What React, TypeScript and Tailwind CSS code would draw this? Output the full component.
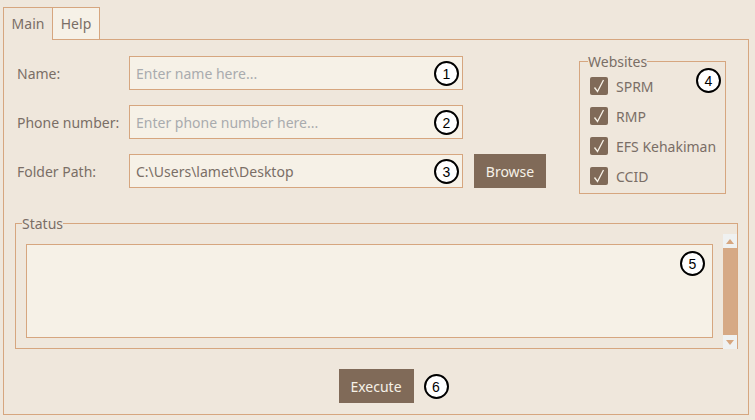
import { useState } from 'react';

// Numbered callout drawn over the controls
function Callout({ n, className }: { n: number; className: string }) {
  return (
    <span
      className={`absolute flex h-[25px] w-[25px] items-center justify-center rounded-full border-2 border-black bg-white text-[14px] leading-none text-black font-['Liberation_Sans',sans-serif] ${className}`}
    >
      {n}
    </span>
  );
}

function Field({
  label,
  placeholder,
  value,
  n,
}: {
  label: string;
  placeholder: string;
  value?: string;
  n: number;
}) {
  return (
    <div className="flex h-[34px] items-center">
      <span className="w-[112px] shrink-0">{label}</span>
      <div className="relative h-[34px] w-[334px]">
        <input
          className="h-full w-full border border-[#d6a67f] bg-[#f6f1e7] pl-[6px] text-[#7a6e66] outline-none placeholder:text-[#a9abae]"
          placeholder={placeholder}
          defaultValue={value}
        />
        <Callout n={n} className="right-[4px] top-[5px]" />
      </div>
    </div>
  );
}

const SITES = ['SPRM', 'RMP', 'EFS Kehakiman', 'CCID'];

function App() {
  const [tab, setTab] = useState<'main' | 'help'>('main');

  return (
    <div className="h-[420px] w-[755px] bg-[#efe7dc] pl-[3px] pt-[7px] text-[14px] text-[#7a6e66] font-['Noto_Sans',sans-serif]">
      {/* tabs */}
      <div className="flex h-[32px] items-start">
        <button
          onClick={() => setTab('main')}
          className="relative z-10 flex h-[33px] w-[50px] items-start justify-center border border-b-0 border-[#d6a67f] bg-[#efe7dc] pt-[5px]"
        >
          Main
        </button>
        <button
          onClick={() => setTab('help')}
          className="flex h-[32px] w-[47px] items-start justify-center border-t border-r border-[#d6a67f] bg-[#f6f1e7] pt-[5px]"
        >
          Help
        </button>
      </div>

      {/* panel */}
      <div className="flex h-[376px] w-[746px] flex-col border border-[#d6a67f]">
        <div className="flex h-[153px] items-start">
          <div className="flex flex-col gap-[15px] pl-[13px] pt-[16px]">
            <Field label="Name:" placeholder="Enter name here..." n={1} />
            <Field label="Phone number:" placeholder="Enter phone number here..." n={2} />
            <div className="flex items-center">
              <Field label="Folder Path:" placeholder="" value="C:\Users\lamet\Desktop" n={3} />
              <button className="ml-[11px] h-[34px] w-[72px] bg-[#806a58] text-[#f6f1e7]">Browse</button>
            </div>
          </div>

          <fieldset className="ml-auto mr-[22px] mt-[12px] w-[147px] border border-[#d6a67f] pb-[8px] pl-[10px]">
            <legend className="ml-[-2px] px-0 leading-[19px]">Websites</legend>
            <div className="mt-[6px] flex flex-col gap-[12px]">
              {SITES.map((s, i) => (
                <label key={s} className="relative flex h-[18px] items-center gap-[8px]">
                  <span className="flex h-[18px] w-[18px] items-center justify-center rounded-[2px] bg-[#806a58]">
                    <svg width="12" height="14" viewBox="0 0 12 14" fill="none">
                      <path d="M1.5 8.5 L4.5 12.5 L10.5 1" stroke="#f6f1e7" strokeWidth="1.3" />
                    </svg>
                  </span>
                  <span>{s}</span>
                  {i === 0 && <Callout n={4} className="right-[4px] top-[-9px]" />}
                </label>
              ))}
            </div>
          </fieldset>
        </div>

        {/* status */}
        <fieldset className="ml-[11px] mr-[10px] mt-[20px] border border-[#d6a67f]">
          <legend className="ml-[6px] px-0 leading-[21px]">Status</legend>
          <div className="flex h-[114px]">
            <div className="relative my-[10px] ml-[10px] mr-[10px] flex-1 border border-[#d6a67f] bg-[#f6f1e7]">
              <Callout n={5} className="right-[7px] top-[6px]" />
            </div>
            <div className="mb-[-1px] flex w-[14px] flex-col">
              <div className="flex h-[14px] items-center justify-center bg-[#eff1f1]">
                <svg width="8" height="5" viewBox="0 0 8 5">
                  <path d="M0 5 L4 0 L8 5 Z" fill="#d6a67f" />
                </svg>
              </div>
              <div className="flex-1 bg-[#d6a985]" />
              <div className="flex h-[14px] items-center justify-center bg-[#eff1f1]">
                <svg width="8" height="5" viewBox="0 0 8 5">
                  <path d="M0 0 L8 0 L4 5 Z" fill="#d6a67f" />
                </svg>
              </div>
            </div>
          </div>
        </fieldset>

        <div className="mt-[20px] flex justify-center">
          <div className="relative">
            <button className="h-[34px] w-[75px] bg-[#806a58] text-[#f6f1e7]">Execute</button>
            <Callout n={6} className="right-[-35px] top-[5px]" />
          </div>
        </div>
      </div>
    </div>
  );
}

export default App;
